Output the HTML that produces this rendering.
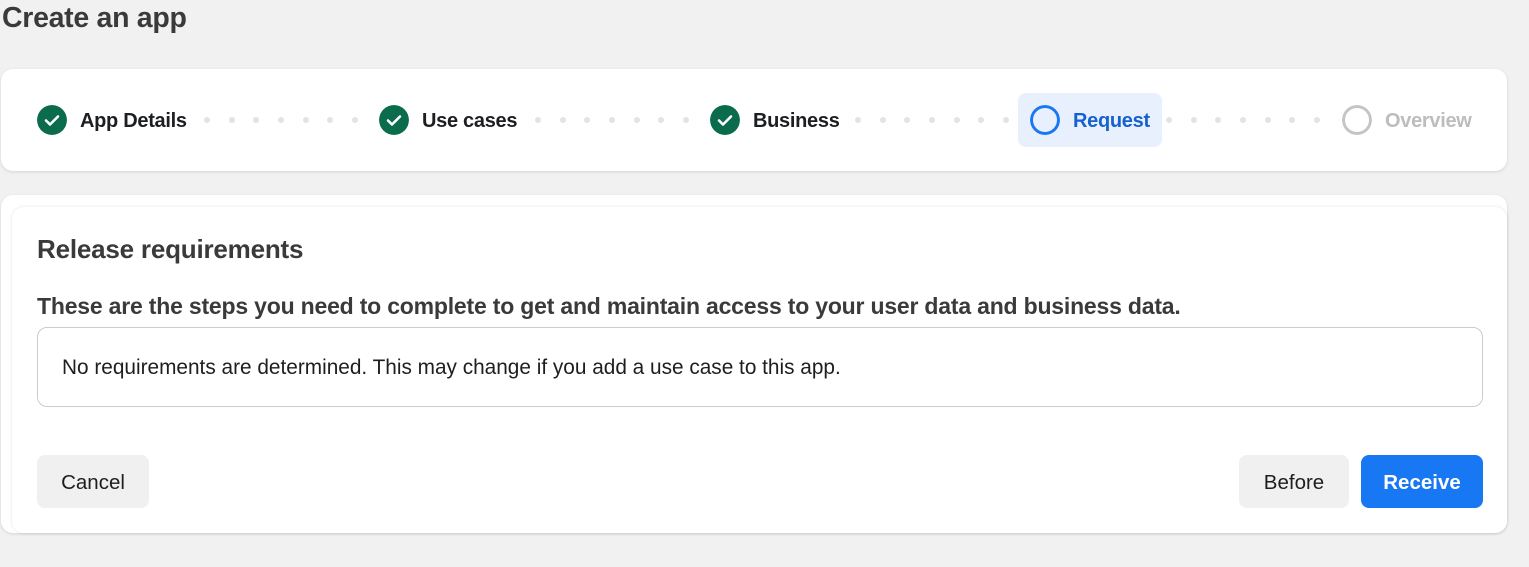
<!DOCTYPE html>
<html><head><meta charset="utf-8"><style>
*{margin:0;padding:0;box-sizing:border-box}
body{width:1529px;height:567px;background:#f1f1f1;font-family:"Liberation Sans",Arial,sans-serif;color:#1c1e21;position:relative;overflow:hidden}
.abs{position:absolute}
h1{position:absolute;left:2px;top:2px;font-size:28.5px;font-weight:bold;color:#3a3a3a;letter-spacing:-0.3px}
.card{position:absolute;background:#fff;border-radius:12px;box-shadow:0 1px 3px rgba(0,0,0,.12)}
.step{position:absolute;top:105px;height:30px;display:flex;align-items:center;font-size:20px;font-weight:bold;letter-spacing:-0.3px;padding-top:2px}
.ic{width:30px;height:30px;border-radius:50%;margin-right:13px;flex:none;margin-top:-2px}
.dots{position:absolute;top:117px;height:6px;display:flex;justify-content:space-between}
.dots i{width:6px;height:6px;border-radius:50%;background:#e3e3e3;display:block}
.btn{position:absolute;top:455px;height:53px;border-radius:8px;background:#f0f0f0;font-size:20.5px;display:flex;align-items:center;justify-content:center;color:#1c1e21;padding-top:3px}
</style></head><body>
<h1>Create an app</h1>
<div class="card" style="left:1px;top:69px;width:1506px;height:102px"></div>
<div class="abs" style="left:1018px;top:93px;width:144px;height:54px;background:#e7f0fc;border-radius:8px"></div>

<div class="step" style="left:37px"><svg class="ic" viewBox="0 0 30 30"><circle cx="15" cy="15" r="15" fill="#0a6b4d"/><path d="M9 15.5l4 4 8-8" stroke="#fff" stroke-width="2.6" fill="none" stroke-linecap="round" stroke-linejoin="round"/></svg>App Details</div>
<div class="dots" style="left:204px;width:154px"><i></i><i></i><i></i><i></i><i></i><i></i><i></i></div>
<div class="step" style="left:379px"><svg class="ic" viewBox="0 0 30 30"><circle cx="15" cy="15" r="15" fill="#0a6b4d"/><path d="M9 15.5l4 4 8-8" stroke="#fff" stroke-width="2.6" fill="none" stroke-linecap="round" stroke-linejoin="round"/></svg>Use cases</div>
<div class="dots" style="left:535px;width:154px"><i></i><i></i><i></i><i></i><i></i><i></i><i></i></div>
<div class="step" style="left:710px"><svg class="ic" viewBox="0 0 30 30"><circle cx="15" cy="15" r="15" fill="#0a6b4d"/><path d="M9 15.5l4 4 8-8" stroke="#fff" stroke-width="2.6" fill="none" stroke-linecap="round" stroke-linejoin="round"/></svg>Business</div>
<div class="dots" style="left:855px;width:154px"><i></i><i></i><i></i><i></i><i></i><i></i><i></i></div>
<div class="step" style="left:1030px;color:#1660d0"><svg class="ic" viewBox="0 0 30 30"><circle cx="15" cy="15" r="13.5" fill="none" stroke="#1877f2" stroke-width="3"/></svg>Request</div>
<div class="dots" style="left:1166px;width:154px"><i></i><i></i><i></i><i></i><i></i><i></i><i></i></div>
<div class="step" style="left:1342px;color:#bdbdbd"><svg class="ic" viewBox="0 0 30 30"><circle cx="15" cy="15" r="13.5" fill="none" stroke="#c4c4c4" stroke-width="3"/></svg>Overview</div>

<div class="card" style="left:1px;top:195px;width:1506px;height:338px"></div>
<div class="card" style="left:12px;top:207px;width:1495px;height:326px;box-shadow:0 0 3px rgba(0,0,0,.12)"></div>
<div class="abs" style="left:37px;top:234px;font-size:26px;font-weight:bold;color:#3a3a3a;letter-spacing:-0.2px">Release requirements</div>
<div class="abs" style="left:37px;top:293px;font-size:23px;font-weight:bold;color:#3a3a3a;letter-spacing:-0.2px">These are the steps you need to complete to get and maintain access to your user data and business data.</div>
<div class="abs" style="left:37px;top:327px;width:1446px;height:80px;border:1px solid #ccc;border-radius:10px"></div>
<div class="abs" style="left:62px;top:356px;font-size:20.8px;color:#1c1e21">No requirements are determined. This may change if you add a use case to this app.</div>
<div class="btn" style="left:37px;width:112px">Cancel</div>
<div class="btn" style="left:1239px;width:110px">Before</div>
<div class="btn" style="left:1361px;width:122px;background:#1877f2;color:#fff;font-weight:bold">Receive</div>
</body></html>
